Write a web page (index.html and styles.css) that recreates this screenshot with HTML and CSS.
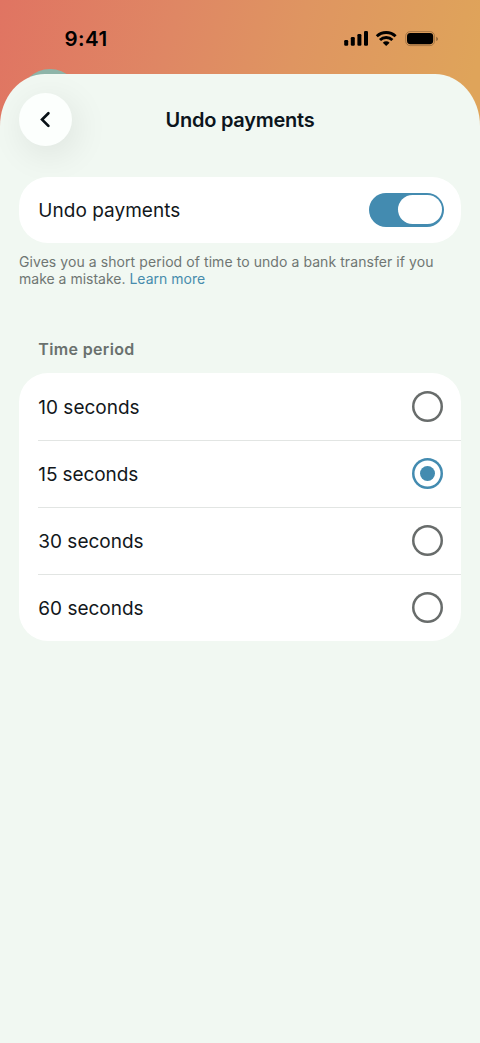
FILE: index.html
```html
<!DOCTYPE html>
<html lang="en">
<head>
<meta charset="utf-8">
<title>Undo payments</title>
<link rel="stylesheet" href="styles.css">
</head>
<body>
<div class="screen">
  <header class="status">
    <span class="clock">9:41</span>
    <svg class="status-icons" width="96" height="18" viewBox="0 0 96 18">
      <rect x="0.2" y="10" width="4" height="5.8" rx="1.2"/>
      <rect x="6.8" y="7" width="4" height="8.8" rx="1.2"/>
      <rect x="13.4" y="4" width="4" height="11.8" rx="1.2"/>
      <rect x="20" y="1" width="4" height="14.8" rx="1.2"/>
      <g fill="none" stroke="#000" stroke-width="2.9">
        <path d="M32.8 6.3a13.7 13.7 0 0 1 18.8 0"/>
        <path d="M36 10a8.9 8.9 0 0 1 12.4 0"/>
      </g>
      <path d="M42.2 16l-3.4-3.3a4.9 4.9 0 0 1 6.8 0z"/>
      <rect x="61.7" y="1.6" width="28.8" height="14" rx="4.4" fill="none" stroke="#000" stroke-opacity=".3" stroke-width="0.8"/>
      <rect x="63" y="3" width="26.2" height="11.2" rx="3.4"/>
      <path d="M92.4 6.7c1.9.8 1.9 3.6 0 4.4z" fill-opacity=".45"/>
    </svg>
  </header>
  <i class="avatar"></i>
  <main class="sheet">
    <div class="nav">
      <button class="back" aria-label="Back">
        <svg width="16" height="18" viewBox="0 0 16 18"><path d="M10.4 2.3L4.1 8.6l6.3 6.3" fill="none" stroke="#081116" stroke-width="2.7" stroke-linecap="round"/></svg>
      </button>
      <h1 class="title">Undo payments</h1>
    </div>
    <section class="card toggle-card">
      <span class="label undo-label">Undo payments</span>
      <span class="switch"><i class="knob"></i></span>
    </section>
    <p class="hint"><span class="hint-first">Gives you a short period of time to undo a bank transfer if you</span><br>make a mistake. <a class="link">Learn more</a></p>
    <h2 class="heading">Time period</h2>
    <section class="card options">
      <div class="option"><span class="label">10 seconds</span><i class="radio"></i></div>
      <div class="option"><span class="label fifteen">15 seconds</span><i class="radio selected"></i></div>
      <div class="option"><span class="label">30 seconds</span><i class="radio"></i></div>
      <div class="option"><span class="label">60 seconds</span><i class="radio"></i></div>
    </section>
  </main>
</div>
</body>
</html>
```

FILE: styles.css
```css
* { box-sizing: border-box; }
body { margin: 0; font-family: Inter, sans-serif; color: #12171b; }
.screen {
  position: relative;
  display: flex;
  flex-direction: column;
  width: 480px;
  height: 1043px;
  overflow: hidden;
  background: #df8764 linear-gradient(105deg, #e07462 0, #df8764 35%, #df9561 60%, #dfa45a 96%) 0 0 / 480px 130px no-repeat;
}
.status {
  display: flex;
  justify-content: space-between;
  align-items: flex-start;
  height: 74px;
  flex: none;
  padding: 27px 40px 0 64.6px;
}
.clock { font-size: 20.5px; line-height: 24px; font-weight: 600; color: #000; letter-spacing: .4px; }
.status-icons { margin-top: 3px; }
.avatar {
  position: absolute;
  left: 20px;
  top: 69px;
  width: 60px;
  height: 60px;
  border-radius: 50%;
  background: #8db4a8;
}
.sheet {
  position: relative;
  flex: 1;
  padding: 19px 19px 0;
  border-radius: 45px 45px 0 0 / 52px 52px 0 0;
  background: #f1f8f2;
}
.nav { display: grid; grid-template-columns: 53px 1fr 53px; align-items: center; height: 53px; }
.back {
  display: grid;
  place-items: center;
  width: 53px;
  height: 53px;
  padding: 0;
  border: 0;
  border-radius: 50%;
  background: #fcfffd;
  box-shadow: 4px 8px 36px rgba(0, 0, 0, .09);
}
.title { margin: 0; text-align: center; font-size: 20px; line-height: 26px; font-weight: 600; letter-spacing: -.25px; color: #0c151c; white-space: nowrap; }
.card { position: relative; border-radius: 29px; background: #fff; }
.toggle-card {
  display: flex;
  align-items: center;
  justify-content: space-between;
  height: 66.6px;
  margin-top: 30.6px;
  padding: 0 17px 0 19.3px;
}
.label { font-size: 19px; line-height: 26px; white-space: nowrap; }
.undo-label { padding-top: 2.4px; letter-spacing: .03px; }
.option .label { padding-top: 2px; }
.option:first-child .label { padding-top: 3.2px; }
.fifteen { letter-spacing: -.1px; }
.switch { display: flex; justify-content: flex-end; width: 75px; height: 34px; padding: 2.5px; border-radius: 17px; background: #438bb0; }
.knob { width: 44px; border-radius: 15px; background: #fff; }
.hint { margin: 9.8px 0 0; font-size: 14px; line-height: 17.3px; color: #6f7673; white-space: nowrap; }
.hint-first { letter-spacing: .07px; }
.link { color: #478cad; }
.heading { margin: 49px 0 0 19.3px; font-size: 16px; line-height: 24px; font-weight: 600; letter-spacing: .35px; color: #6a716e; }
.options { margin-top: 12px; padding-left: 19.3px; }
.option { display: flex; align-items: center; justify-content: space-between; height: 67.1px; padding-right: 18px; }
.option + .option { border-top: 1px solid #e2e5e3; }
.radio { display: grid; place-items: center; width: 31px; height: 31px; border-radius: 50%; box-shadow: inset 0 0 0 2.5px #686c6b; }
.radio.selected { box-shadow: inset 0 0 0 2.5px #438bb0; }
.radio.selected::after { content: ""; width: 15px; height: 15px; border-radius: 50%; background: #438bb0; }
```
